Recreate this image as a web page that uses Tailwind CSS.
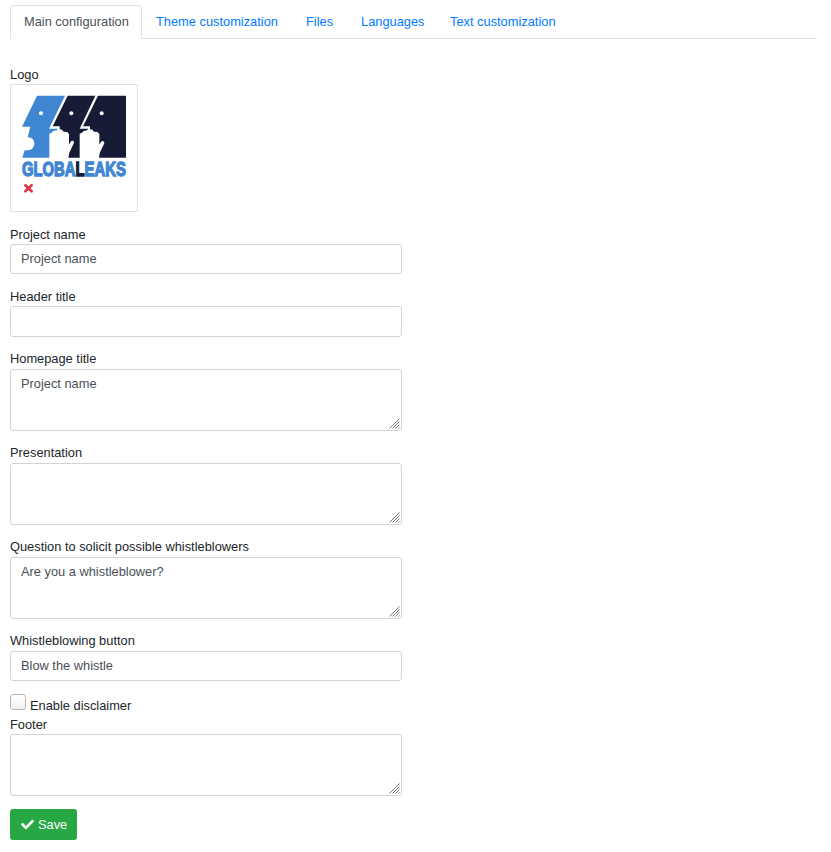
<!DOCTYPE html>
<html lang="en">
<head>
<meta charset="utf-8">
<title>Main configuration</title>
<script src="https://cdn.jsdelivr.net/npm/@tailwindcss/browser@4"></script>
</head>
<body class="bg-white font-['Liberation_Sans',Arial,sans-serif] text-[12.84px] leading-[19px] text-[#212529]">
<svg class="hidden"><symbol id="grip" viewBox="0 0 11 11"><path d="M0.5 10.5L10.5 0.5M3.5 10.5L10.5 3.5M6.5 10.5L10.5 6.5M9.5 10.5L10.5 9.5" stroke="#777" stroke-width="1" fill="none"/></symbol></svg>
<div class="pl-[10px] pr-[14px] pt-[5px]">
  <nav class="flex h-[34px] border-b border-[#dee2e6] leading-[19.5px] text-[#007bff]">
    <a class="h-[34px] w-[132px] shrink-0 rounded-t-[4px] border border-b-0 border-[#dee2e6] bg-white pl-[13px] pt-[6px] text-[#495057]">Main configuration</a>
    <a class="w-[150px] pl-[14px] pt-[7px]">Theme customization</a>
    <a class="w-[55px] pl-[14px] pt-[7px]">Files</a>
    <a class="w-[89px] pl-[14px] pt-[7px]">Languages</a>
    <a class="pl-[14px] pt-[7px]">Text customization</a>
  </nav>
  <main class="w-[392px] pt-[26px]">
    <label class="block h-[19px] leading-[20px]">Logo</label>
    <div class="mb-[13px] h-[128px] w-[128px] border border-[#dee2e6]">
      <svg class="-m-px block h-[128px] w-[128px]" viewBox="30 42 384 384">
        <path fill="#3f87d2" d="M111 77H195L147 176H173L171 181L160 183L155 188L148 191V263H67L74 241H84C96 241 103 231 103 220C103 209 95 202 83 202L91 170H66Z"/>
        <path fill="#161c36" d="M203 77H286L239 176H264L262 181L251 183L246 188L239 191V263H205L208 248L222 218C222 212 215 211 212 215L207 224V193L202 186L191 185L186 179L179 178V169H158Z"/>
        <path fill="#161c36" d="M294 77H378V263H297L299 249L313 220C313 213 306 211 303 216L298 224V193L293 186L282 185L277 179L270 178V169H249Z"/>
        <g fill="#fff"><circle cx="123" cy="130" r="6"/><circle cx="214" cy="130" r="6"/><circle cx="305" cy="130" r="6"/></g>
        <text transform="translate(66 317) scale(.767 1)" font-family="Liberation Sans, sans-serif" font-weight="700" font-size="58" fill="#3f87d2" stroke="#3f87d2" stroke-width="4">GLOBA<tspan fill="#161c36" stroke="#161c36">L</tspan>EAKS</text>
        <path d="M76 346L95 364M95 346L76 364" fill="none" stroke="#dc3545" stroke-width="8" stroke-linecap="round"/>
      </svg>
    </div>
    <label class="block h-[19px]">Project name</label>
    <input class="mb-[13px] block h-[30px] w-full rounded-[3px] border border-[#ced4da] px-[10px] pb-[2px] text-[#495057]" value="Project name">
    <label class="block h-[19px]">Header title</label>
    <input class="mb-[12px] block h-[31px] w-full rounded-[3px] border border-[#ced4da] px-[10px] text-[#495057]">
    <label class="block h-[20px]">Homepage title</label>
    <div class="relative mb-[12px]"><textarea class="block h-[62px] w-full resize-none rounded-[3px] border border-[#ced4da] px-[10px] py-[4px] text-[#495057]">Project name</textarea><svg class="absolute bottom-[2px] right-[2px] h-[11px] w-[11px]"><use href="#grip"/></svg></div>
    <label class="block h-[20px]">Presentation</label>
    <div class="relative mb-[12px]"><textarea class="block h-[62px] w-full resize-none rounded-[3px] border border-[#ced4da] px-[10px] py-[4px] text-[#495057]"></textarea><svg class="absolute bottom-[2px] right-[2px] h-[11px] w-[11px]"><use href="#grip"/></svg></div>
    <label class="block h-[20px]">Question to solicit possible whistleblowers</label>
    <div class="relative mb-[12px]"><textarea class="block h-[62px] w-full resize-none rounded-[3px] border border-[#ced4da] px-[10px] py-[4px] text-[#495057]">Are you a whistleblower?</textarea><svg class="absolute bottom-[2px] right-[2px] h-[11px] w-[11px]"><use href="#grip"/></svg></div>
    <label class="block h-[20px]">Whistleblowing button</label>
    <input class="mb-[13px] block h-[30px] w-full rounded-[3px] border border-[#ced4da] px-[10px] pb-[2px] text-[#495057]" value="Blow the whistle">
    <label class="flex h-[21px] gap-[4px]">
      <span class="h-[16px] w-[16px] rounded-[3px] border border-[#bbb4ac] bg-linear-to-b from-white to-[#f2f2f2]"></span>
      <span class="pt-[2px]">Enable disclaimer</span>
    </label>
    <label class="block h-[19px]">Footer</label>
    <div class="relative mb-[13px]"><textarea class="block h-[62px] w-full resize-none rounded-[3px] border border-[#ced4da] px-[10px] py-[4px] text-[#495057]"></textarea><svg class="absolute bottom-[2px] right-[2px] h-[11px] w-[11px]"><use href="#grip"/></svg></div>
    <button class="flex h-[31px] w-[67px] items-center gap-[4px] rounded-[3px] bg-[#28a745] pl-[11px] text-white">
      <svg class="h-[13px] w-[13px]" viewBox="0 0 512 512" fill="currentColor"><path d="M173.898 439.404l-166.4-166.4c-9.997-9.997-9.997-26.206 0-36.204l36.203-36.204c9.997-9.998 26.207-9.998 36.204 0L192 312.69 432.095 72.596c9.997-9.997 26.207-9.997 36.204 0l36.203 36.204c9.997 9.997 9.997 26.206 0 36.204l-294.4 294.401c-9.998 9.997-26.207 9.997-36.204-.001z"/></svg>
      <span>Save</span>
    </button>
  </main>
</div>
</body>
</html>
